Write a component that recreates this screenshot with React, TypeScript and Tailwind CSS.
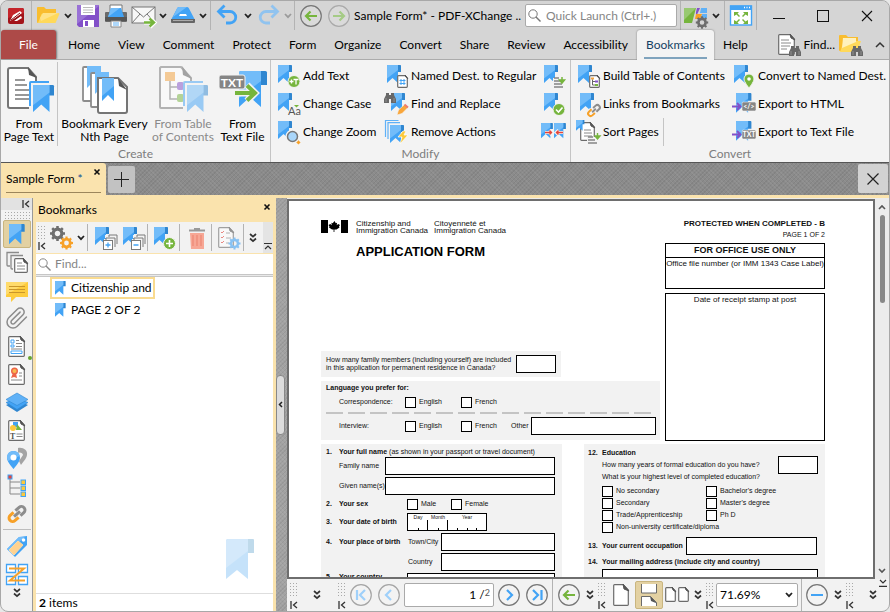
import type { ReactNode } from "react";
import { clsx } from "clsx";

interface SvgProps {
  size?: number;
  w?: number;
  h?: number;
  className?: string;
  children: ReactNode;
}

function Svg({ size = 24, w, h, className, children }: SvgProps) {
  const width = w ?? size;
  const height = h ?? size;
  return (
    <svg
      width={width}
      height={height}
      viewBox={`0 0 ${width} ${height}`}
      fill="none"
      className={clsx("shrink-0 overflow-visible", className)}
      aria-hidden="true"
    >
      {children}
    </svg>
  );
}

/* Blue ribbon bookmark, 14 x 18 units before scaling */
function Mark({ x = 1, y = 1, s = 1 }: { x?: number; y?: number; s?: number }) {
  return (
    <g transform={`translate(${x} ${y}) scale(${s})`}>
      <path d="M10 0h3.2a.8.8 0 0 1 .8.8V7h-4z" fill="#2f86d0" />
      <path d="M0 .8A.8.8 0 0 1 .8 0H11v18l-5.5-5L0 18z" fill="#42a3f5" />
      <path d="M0 .8A.8.8 0 0 1 .8 0H11v5L0 13.500z" fill="#72bcf9" />
    </g>
  );
}

function Page({ x = 0, y = 0, w = 16, h = 20, c = 5, stroke = "#6b6b6b" }) {
  return (
    <g transform={`translate(${x} ${y})`}>
      <path
        d={`M1.500 .7H${w - c}L${w - 0.7} ${c}V${h - 1.500}a.8.8 0 0 1-.8.8H1.500a.8.8 0 0 1-.8-.8V1.500a.8.8 0 0 1 .8-.8z`}
        fill="#fff"
        stroke={stroke}
        strokeWidth="1.2"
      />
      <path d={`M${w - c} 0L${w} ${c + 1}L${w - c + 1} ${c - 1}z`} fill="#555" stroke="#555" />
    </g>
  );
}

function Chevron({ light = false }: { light?: boolean }) {
  return (
    <Svg w={8} h={6}>
      <path d="M1 1l3 3.200L7 1" stroke={light ? "#9b9b9b" : "#222"} strokeWidth="1.8" />
    </Svg>
  );
}

function DoubleChevron() {
  return (
    <Svg w={8} h={10}>
      <path d="M1 1l3 2.700L7 1M1 5.500l3 2.700 3-2.700" stroke="#333" strokeWidth="1.7" />
    </Svg>
  );
}

function Collapse() {
  return (
    <Svg w={8} h={8}>
      <path d="M1 0v8M7 1L3.500 4 7 7" stroke="#333" strokeWidth="1.3" />
    </Svg>
  );
}

function Gear({ x, y, r, color }: { x: number; y: number; r: number; color: string }) {
  return (
    <g transform={`translate(${x} ${y})`}>
      <circle r={r * 0.58} stroke={color} strokeWidth={r * 0.42} />
      {[0, 45, 90, 135, 180, 225, 270, 315].map((a) => (
        <rect
          key={a}
          x={-r * 0.17}
          y={-r}
          width={r * 0.34}
          height={r * 0.34}
          fill={color}
          transform={`rotate(${a})`}
        />
      ))}
    </g>
  );
}

function Binoculars({ x, y }: { x: number; y: number }) {
  return (
    <g transform={`translate(${x} ${y})`}>
      <path d="M2 1h3v2h2V1h3v2l2 4v4H7V7H5v4H0V7l2-4z" fill="#686868" />
      <path d="M2 6v4M10 6v4" stroke="#8f8f8f" />
    </g>
  );
}

function Grip({ className }: { className?: string }) {
  return (
    <span
      className={clsx(
        "block bg-[radial-gradient(#a9a9a9_1px,transparent_1px)] bg-[size:3px_3px]",
        className,
      )}
    />
  );
}

function GripColumn() {
  return (
    <span className="flex w-[10px] shrink-0 flex-col items-center gap-1">
      <Grip className="h-[15px] w-full" />
      <Collapse />
    </span>
  );
}

function Sep({ className }: { className?: string }) {
  return <span className={clsx("w-px shrink-0 self-stretch bg-[#b3b3b3]", className)} />;
}

function RoundArrow({ label, color, d, ring = "#777" }: { label: string; color: string; d: string; ring?: string }) {
  return (
    <button aria-label={label} className="shrink-0">
      <Svg size={22}>
        <circle cx="11" cy="11" r="10.300" stroke={ring} strokeWidth="1.2" fill="#ffffff22" />
        <path d={d} stroke={color} strokeWidth="2.200" />
      </Svg>
    </button>
  );
}

const LEFT = "M17 11H6.500M10.500 6.500L6 11l4.500 4.500";
const RIGHT = "M5 11h10.500M11.500 6.500L16 11l-4.500 4.500";

function TitleBar() {
  return (
    <header className="flex h-[29px] items-center bg-[#d5d5d5]">
      <span className="flex w-[30px] shrink-0 items-center justify-center">
        <Svg size={16}>
          <rect width="16" height="16" rx="2" fill="#a3141a" />
          <path d="M0 2a2 2 0 0 1 2-2h12a2 2 0 0 1 2 2v3L0 10z" fill="#c4252b" />
          <path d="M2 13l3-6 7-4 2 2-7 5zM6 13l7-5 1 2-5 3z" fill="#fff" />
          <path d="M3 12l9-7M6 12l7-5" stroke="#8c1016" />
        </Svg>
      </span>
      <Sep />
      <div className="flex shrink-0 items-center pl-1">
        <button aria-label="Open" className="w-7">
          <Svg>
            <path d="M1 4a1 1 0 0 1 1-1h6l2 2h10v5H8L3 19H2a1 1 0 0 1-1-1z" fill="#f9bd2f" />
            <path d="M8 9h14.500l1 .8-4 9.200H2L5.500 10z" fill="#ffd95a" />
            <path d="M7 9h15L5 17 4 14z" fill="#ffe387" />
          </Svg>
        </button>
        <button aria-label="Open menu"><Chevron /></button>
        <button aria-label="Save" className="ml-1">
          <Svg>
            <path d="M1 2a1 1 0 0 1 1-1h20a1 1 0 0 1 1 1v21H3l-2-2z" fill="#8250c8" />
            <path d="M1 2a1 1 0 0 1 1-1h20a1 1 0 0 1 1 1L1 20z" fill="#9971d6" />
            <path d="M5 1h14v10H5zM7 16h11v7H7z" fill="#fff" />
            <path d="M7 3.500h10M7 6h10M7 8.500h10" stroke="#bbb" />
            <path d="M9 17h3v5H9z" fill="#8250c8" />
          </Svg>
        </button>
        <button aria-label="Print" className="ml-1">
          <Svg>
            <path d="M6 1h12v7H6z" fill="#fff" stroke="#777" />
            <rect x="1" y="8" width="22" height="10" rx="1" fill="#6a6a6a" />
            <path d="M1 13h22v4H1z" fill="#555" />
            <path d="M4 13l3-9h10l3 9z" fill="#42a3f5" />
            <path d="M4 13l3-9h9z" fill="#72bcf9" />
            <path d="M7 17h10v6H7z" fill="#fff" stroke="#888" />
            <path d="M9 19h6M9 21h6" stroke="#5fb1f7" />
          </Svg>
        </button>
        <button aria-label="Email" className="ml-[3px] mr-[3px]">
          <Svg w={25} h={24}>
            <rect x="1" y="3" width="23" height="16" fill="#f7f7f7" stroke="#777" />
            <path d="M1 3l11.500 10L24 3M1 19l8-9M24 19l-8-9" stroke="#777" />
            <path d="M13 18.500h10M19 14l4.500 4.500L19 23" stroke="#fff" strokeWidth="4" />
            <path d="M13 18.500h9M18.500 14.500l4.500 4-4.500 4" stroke="#76b53d" strokeWidth="2.400" />
          </Svg>
        </button>
        <button aria-label="Email menu"><Chevron /></button>
        <button aria-label="Scan" className="ml-1 mr-1">
          <Svg>
            <path d="M6 4.500A2 2 0 0 1 8 3h8a2 2 0 0 1 2 1.500L23.500 15H.5z" fill="#42a3f5" />
            <path d="M6 4.500A2 2 0 0 1 8 3h8L2 13z" fill="#72bcf9" />
            <path d="M9 10h6l1 2H8z" fill="#fff" />
            <path d="M0 15h24v3a1 1 0 0 1-1 1H1a1 1 0 0 1-1-1z" fill="#666" />
            <path d="M2 16.500h20" stroke="#aaa" />
          </Svg>
        </button>
        <button aria-label="Scan menu"><Chevron /></button>
      </div>
      <Sep className="ml-[3px]" />
      <div className="flex shrink-0 items-center gap-1 pl-[5px]">
        <button aria-label="Undo">
          <Svg>
            <path d="M2 7.500h12a5.500 5.500 0 0 1 0 11.500h-4M8.500 1.500l-6 6 6 6" stroke="#42a3f5" strokeWidth="2.800" />
          </Svg>
        </button>
        <button aria-label="Undo menu"><Chevron /></button>
        <button aria-label="Redo">
          <Svg>
            <path d="M22 7.500H10a5.500 5.500 0 0 0 0 11.500h4M15.500 1.500l6 6-6 6" stroke="#90c3ef" strokeWidth="2.800" />
          </Svg>
        </button>
        <button aria-label="Redo menu"><Chevron light /></button>
      </div>
      <Sep className="ml-[2px]" />
      <div className="flex shrink-0 items-center gap-[6px] pl-[5px]">
        <RoundArrow label="Back" color="#76b53d" d={LEFT} />
        <RoundArrow label="Forward" color="#a5cb86" d={RIGHT} ring="#aaa" />
      </div>
      <h1 className="ml-1 min-w-0 flex-1 whitespace-nowrap text-xs">Sample Form* - PDF-XChange ..</h1>
      <label className="flex h-[23px] w-[152px] shrink-0 items-center gap-[5px] rounded-[2px] border border-[#aaa] bg-white pl-[2px]">
        <Svg size={13}>
          <circle cx="5" cy="5" r="4.200" stroke="#777" />
          <path d="M8 8l4.500 4.500" stroke="#777" strokeWidth="1.4" />
        </Svg>
        <input
          aria-label="Quick Launch"
          placeholder="Quick Launch (Ctrl+.)"
          className="w-full min-w-0 bg-transparent text-xs outline-none placeholder:text-[#858585]"
        />
      </label>
      <Sep className="ml-[3px]" />
      <button aria-label="UI options" className="ml-[3px] mr-1">
        <Svg>
          <path d="M0 4h12L8 19H0z" fill="#76b53d" />
          <path d="M0 4h12L0 16z" fill="#98c970" />
          <path d="M13 4h3l-4 9v-5z" fill="#8250c8" />
          <path d="M17 4h6v5h-7zM18 10h5v4h-6z" fill="#5fb1f7" />
          <path d="M12 10h6l-2 5h-5z" fill="#f7a128" />
          <Gear x={18} y={18.5} r={6.2} color="#6d6d6d" />
        </Svg>
      </button>
      <button aria-label="UI options menu"><Chevron /></button>
      <Sep className="ml-1" />
      <button aria-label="Full screen" className="ml-1 mr-[3px]">
        <Svg>
          <rect x="1.500" y="2" width="21" height="19" fill="#fff" stroke="#42a3f5" strokeWidth="1.4" />
          <path d="M1 1.500h22V6H1z" fill="#42a3f5" />
          <path d="M15 3.500h1M17.500 3.500h1M20 3.500h1" stroke="#fff" strokeWidth="1.4" />
          <path
            d="M5 8h5L8.500 9.500 11 12l-1 1-2.500-2.500L5 12zM19 8h-5l1.500 1.500L13 12l1 1 2.500-2.500L19 12zM5 20h5l-1.500-1.500L11 16l-1-1-2.500 2.500L5 16zM19 20h-5l1.500-1.500L13 16l1-1 2.500 2.500L19 16z"
            fill="#76b53d"
          />
        </Svg>
      </button>
      <Sep />
      <div className="flex h-full shrink-0 items-center gap-8 pl-4 pr-4">
        <button aria-label="Minimize"><Svg size={12}><path d="M0 8.500h12" stroke="#111" /></Svg></button>
        <button aria-label="Maximize"><Svg size={12}><rect x=".5" y=".5" width="11" height="11" stroke="#111" /></Svg></button>
        <button aria-label="Close"><Svg size={12}><path d="M1 1l10 10M11 1L1 11" stroke="#111" strokeWidth="1.1" /></Svg></button>
      </div>
    </header>
  );
}

const TABS = [
  "Home", "View", "Comment", "Protect", "Form", "Organize", "Convert",
  "Share", "Review", "Accessibility", "Bookmarks", "Help",
];

function RibbonTabs() {
  return (
    <nav className="flex h-[30px] items-stretch border-b border-[#ababab] bg-[#d5d5d5] text-xs">
      <button className="w-[55px] shrink-0 rounded-t-[3px] bg-[#ad4a48] text-white shadow-[1px_0_2px_#777]">
        File
      </button>
      <span className="w-[3px] shrink-0" />
      {TABS.map((tab) => (
        <button
          key={tab}
          className={clsx(
            "relative shrink-0 px-[9px]",
            tab === "Bookmarks" &&
              "-mb-px rounded-t-[3px] bg-[#f3f3f3] text-[#143f63] shadow-[0_0_2px_#777] [clip-path:inset(-3px_-3px_0_-3px)]",
          )}
        >
          {tab}
          {tab === "Bookmarks" && <span className="absolute inset-x-[7px] bottom-px h-[2px] bg-[#7fa3bd]" />}
        </button>
      ))}
      <div className="ml-auto flex shrink-0 items-center gap-[3px]">
        <button className="flex items-center gap-[2px]">
          <Svg>
            <Page x={1} y={1} w={17} h={21} />
            <path d="M4 7h8M4 10h10M4 13h9M4 16h6" stroke="#8a8a8a" />
            <Binoculars x={12} y={12} />
          </Svg>
          Find...
        </button>
        <button aria-label="Search in folder">
          <Svg w={26} h={24}>
            <path d="M1 3a1 1 0 0 1 1-1h6l2 2h10v5H8L3 18H2a1 1 0 0 1-1-1z" fill="#f9bd2f" />
            <path d="M6 8h17l-4 11H2z" fill="#ffd95a" />
            <path d="M5 5h13v4L4 15z" fill="#fff1bd" />
            <Binoculars x={13} y={12} />
          </Svg>
        </button>
        <button aria-label="Collapse ribbon" className="mr-1 pl-2">
          <Svg w={10} h={7}><path d="M1 6l4-4 4 4" stroke="#333" strokeWidth="1.500" /></Svg>
        </button>
      </div>
    </nav>
  );
}

function BigButton({ lines, icon, muted, className }: { lines: string[]; icon: ReactNode; muted?: boolean; className: string }) {
  return (
    <button
      className={clsx("flex shrink-0 flex-col items-center whitespace-nowrap pt-1 leading-[13px]", muted && "text-[#8a8a8a]", className)}
    >
      {icon}
      <span className="mt-[3px]">{lines[0]}</span>
      <span>{lines[1]}</span>
    </button>
  );
}

function SmallButton({ label, icon, aria }: { label?: string; icon: ReactNode; aria?: string }) {
  return (
    <button aria-label={aria} className="flex h-7 items-center gap-[2px] whitespace-nowrap">
      <Svg>{icon}</Svg>
      {label}
    </button>
  );
}

function Group({ title, className, children }: { title: string; className: string; children: ReactNode }) {
  return (
    <section className={clsx("flex flex-col pt-[2px]", className)}>
      <div className="flex h-[84px]">{children}</div>
      <h2 className="text-center leading-[16px] text-[#7d7d7d]">{title}</h2>
    </section>
  );
}

function Tag({ text }: { text: string }) {
  return (
    <g>
      <rect x="10" y="10" width="14" height="9" rx="1.500" fill="#858585" stroke="#f3f3f3" strokeWidth=".6" />
      <text x="17" y="17.200" fontSize="7" fontWeight="bold" textAnchor="middle" fill="#fff">{text}</text>
      <path d="M0 14.500h8M5 11l3.500 3.500L5 18" stroke="#8250c8" strokeWidth="1.800" />
    </g>
  );
}

function Ribbon() {
  return (
    <div className="flex h-[102px] bg-[#f3f3f3] text-xs text-black">
      <Group title="Create" className="w-[269px] shrink-0">
        <BigButton
          className="w-14"
          lines={["From", "Page Text"]}
          icon={
            <Svg size={48}>
              <path d="M5 2h18l8 9v29a2 2 0 0 1-2 2H5a2 2 0 0 1-2-2V4a2 2 0 0 1 2-2z" fill="#fff" stroke="#757575" strokeWidth="2" />
              <path d="M23 1l9 11-8-3z" fill="#555" />
              <path d="M10 14h10M10 19h12M10 24h14M10 29h14M10 33h14" stroke="#777" strokeWidth="1.500" />
              <path d="M24 15h22v30H24z" fill="#f3f3f3" />
              <path d="M25 40V17a1 1 0 0 1 1-1h18" stroke="#42a3f5" strokeWidth="2" />
              <Mark x={28} y={19} s={1.5} />
            </Svg>
          }
        />
        <Sep className="bg-[#c4c4c4]" />
        <BigButton
          className="w-[93px]"
          lines={["Bookmark Every", "Nth Page"]}
          icon={
            <Svg size={48}>
              {[[0, 0], [8, 6]].map(([x, y]) => (
                <g key={x} transform={`translate(${x} ${y})`}>
                  <path d="M3 1h16v34H3a1 1 0 0 1-1-1V2a1 1 0 0 1 1-1z" fill="#fff" stroke="#8c8c8c" strokeWidth="1.800" />
                  <path d="M6 0h14v8L6 22z" fill="#72bcf9" />
                </g>
              ))}
              <path d="M17 12h20l9 9v24a2 2 0 0 1-2 2H19a2 2 0 0 1-2-2z" fill="#fff" stroke="#757575" strokeWidth="2" />
              <path d="M37 12l9 12-8-4z" fill="#555" />
              <path d="M21 12h12v23l-6-6-6 6z" fill="#42a3f5" />
              <path d="M21 12h12v8L21 30z" fill="#72bcf9" />
            </Svg>
          }
        />
        <BigButton
          className="w-[64px]"
          muted
          lines={["From Table", "of Contents"]}
          icon={
            <Svg size={48} className="opacity-50">
              <path d="M2 1h20l10 11v30H2a1 1 0 0 1-1-1V2z" fill="#fff" stroke="#757575" strokeWidth="2" />
              <path d="M23 0l10 13-9-4z" fill="#555" />
              <rect x="6" y="6" width="10" height="9" fill="#f5a33c" />
              <path d="M11 15v18h7M11 21h8" stroke="#757575" strokeWidth="1.500" />
              <rect x="18" y="16" width="7" height="8" rx="2" fill="#8250c8" />
              <rect x="18" y="28" width="7" height="8" rx="2" fill="#76b53d" />
              <path d="M24 15h22v30H24z" fill="#f3f3f3" />
              <path d="M25 40V17a1 1 0 0 1 1-1h18" stroke="#42a3f5" strokeWidth="2" />
              <Mark x={28} y={19} s={1.5} />
            </Svg>
          }
        />
        <BigButton
          className="flex-1"
          lines={["From", "Text File"]}
          icon={
            <Svg size={48}>
              <Mark x={20} y={5} s={2} />
              <rect x="0" y="9" width="26" height="14" rx="2" fill="#858585" stroke="#f3f3f3" />
              <text x="13" y="20.500" fontSize="12" fontWeight="bold" textAnchor="middle" fill="#fff">TXT</text>
              <path d="M15 27h20M28 19l8 8-8 8" stroke="#f3f3f3" strokeWidth="7" />
              <path d="M16 27h19M28 19.500l8 7.500-8 7.500" stroke="#76b53d" strokeWidth="4" />
            </Svg>
          }
        />
      </Group>
      <Sep className="bg-[#c4c4c4]" />
      <Group title="Modify" className="w-[299px] shrink-0">
        <div className="w-[108px] shrink-0 pl-[6px]">
          <SmallButton label="Add Text" icon={<>
            <Mark />
            <circle cx="17" cy="17.500" r="6" fill="#76b53d" stroke="#f3f3f3" />
            <path d="M12.500 17.500h4M14.500 15.500v4M16.500 15.500h5M19 15.500v5" stroke="#fff" strokeWidth="1.3" />
          </>} />
          <SmallButton label="Change Case" icon={<>
            <Mark />
            <text x="11" y="23" fontSize="11" fill="#555" stroke="#f3f3f3" strokeWidth="2" paintOrder="stroke">Aa</text>
            <path d="M17 13h5l-2.500 2.500z" fill="#76b53d" />
          </>} />
          <SmallButton label="Change Zoom" icon={<>
            <Mark />
            <path d="M18 19l4.500 4.500" stroke="#f7a128" strokeWidth="3" />
            <circle cx="15.500" cy="16.500" r="5.500" fill="#a9d6fa" stroke="#f3f3f3" strokeWidth="3" />
            <circle cx="15.500" cy="16.500" r="5" fill="#a9d6fa" stroke="#777" strokeWidth="1.500" />
          </>} />
        </div>
        <div className="w-[157px] shrink-0 pl-[6px]">
          <SmallButton label="Named Dest. to Regular" icon={<>
            <Mark x={2} />
            <Page x={12} y={11} w={11} h={13} c={3} />
            <path d="M16 15v6M19 15v6M14.500 16.500h6M14.500 19.500h6" stroke="#42a3f5" />
          </>} />
          <SmallButton label="Find and Replace" icon={<>
            <Mark x={6} y={1} />
            <path d="M12 23l1.500-5 6-5.500 3.500 3-6 6z" fill="#f9a63b" stroke="#f3f3f3" strokeWidth=".6" />
            <path d="M19.500 12.500l3.500 3" stroke="#ef7c6f" strokeWidth="2" />
            <Binoculars x={-1} y={0} />
          </>} />
          <SmallButton label="Remove Actions" icon={<>
            <path d="M.5 17V.5h13M3 19V2.700H15" stroke="#5fb1f7" strokeWidth="1.2" />
            <Mark x={5} y={5} />
            <path d="M18 11l-5 6h4l-2 7 8-9h-4l2-4z" fill="#fcc93b" stroke="#fff" strokeWidth=".7" />
          </>} />
        </div>
        <div className="pl-[6px]">
          <SmallButton aria="Sort Bookmarks" icon={<>
            <Mark x={2} />
            <path d="M11 14h12v10H11z" fill="#f3f3f3" />
            <path d="M12 14h5M12 17h6M12 20h8M12 23h9" stroke="#858585" strokeWidth="1.500" />
            <path d="M20 13v4M17.500 16h5L20 19z" stroke="#76b53d" strokeWidth="1.500" fill="#76b53d" />
          </>} />
          <SmallButton aria="Validate Bookmarks" icon={<>
            <Mark x={2} />
            <circle cx="17" cy="17.500" r="6" fill="#76b53d" stroke="#f3f3f3" />
            <path d="M14 17.500l2.500 2.500 4-4.500" stroke="#fff" strokeWidth="1.600" />
          </>} />
          <SmallButton aria="Merge Bookmarks" icon={<>
            <Mark x={-1} y={3} s={0.85} />
            <Mark x={12} y={3} s={0.85} />
            <path d="M3 12.500h7M7.500 10L10 12.500 7.500 15M21 12.500h-7M16.500 10L14 12.500l2.500 2.500" stroke="#f3f3f3" strokeWidth="3" />
            <path d="M3 12.500h7M7.500 10.500l2 2-2 2M21 12.500h-7M16.500 10.500l-2 2 2 2" stroke="#e4453a" strokeWidth="1.400" />
          </>} />
        </div>
      </Group>
      <Sep className="bg-[#c4c4c4]" />
      <Group title="Convert" className="flex-1">
        <div className="w-[155px] shrink-0 pl-[6px]">
          <SmallButton label="Build Table of Contents" icon={<>
            <Mark />
            <Page x={12} y={11} w={11} h={13} c={3} />
            <path d="M14 13.500h3v2h-3z" fill="#f5a33c" />
            <path d="M18 16.500h3v2h-3z" fill="#8250c8" />
            <path d="M18 20h3v2h-3z" fill="#76b53d" />
            <path d="M15.500 15.500V21H18M15.500 17.500H18" stroke="#666" />
          </>} />
          <SmallButton label="Links from Bookmarks" icon={<>
            <Mark x={3} />
            <g transform="translate(17 18.500) rotate(-42)">
              <path d="M-1 -2.500H-4.500a2.500 2.500 0 0 0 0 5H-1M1 -2.500h3.500a2.500 2.500 0 0 1 0 5H1" stroke="#f3f3f3" strokeWidth="4" />
              <path d="M-1 -2.500H-4.500a2.500 2.500 0 0 0 0 5H-1" stroke="#f7a128" strokeWidth="2" />
              <path d="M1 -2.500h3.500a2.500 2.500 0 0 1 0 5H1M-2.500 0h5" stroke="#8d8d8d" strokeWidth="2" />
            </g>
          </>} />
          <div className="flex items-stretch gap-1">
            <SmallButton label="Sort Pages" icon={<>
              <Page x={3} y={2} w={15} h={19} />
              <Mark x={-1} y={0} s={0.6} />
              <path d="M7 10h7M7 13h8M7 16h8" stroke="#888" />
              <path d="M10 17h13v7H10z" fill="#f3f3f3" />
              <path d="M11 17h5M11 20h7M11 23h9" stroke="#858585" strokeWidth="1.500" />
              <path d="M20.500 13v4M18 16h5l-2.500 3z" stroke="#76b53d" strokeWidth="1.400" fill="#76b53d" />
            </>} />
            <Sep className="bg-[#c4c4c4]" />
          </div>
        </div>
        <div className="shrink-0 pl-[6px]">
          <SmallButton label="Convert to Named Dest." icon={<>
            <Mark x={2} />
            <path d="M17 10a5 5 0 0 1 5 5c0 3-5 9-5 9s-5-6-5-9a5 5 0 0 1 5-5z" fill="#76b53d" stroke="#f3f3f3" />
            <circle cx="17" cy="15" r="1.800" fill="#fff" />
          </>} />
          <SmallButton label="Export to HTML" icon={<><Mark x={4} y={1} s={1.1} /><Tag text="</>" /></>} />
          <SmallButton label="Export to Text File" icon={<><Mark x={4} y={1} s={1.1} /><Tag text="TXT" /></>} />
        </div>
      </Group>
    </div>
  );
}

const TEXTURE =
  "bg-[repeating-linear-gradient(45deg,#ffffff10_0_1px,transparent_1px_3px),repeating-linear-gradient(-45deg,#00000010_0_1px,transparent_1px_3px)]";

function DocumentTabs() {
  return (
    <div className={clsx("flex h-9 items-start border-b-[3px] border-t border-b-[#fae3ad] border-t-[#555] bg-[#8b8b8b]", TEXTURE)}>
      <div className="relative h-8 w-[105px] shrink-0 rounded-tr-[3px] bg-[#fae3ae] pl-[5px] text-xs leading-8">
        Sample Form <span className="text-[#0b4d94]">*</span>
        <button aria-label="Close Sample Form" className="absolute right-[6px] top-[6px]">
          <Svg size={6}><path d="M.5 .5l5 5M5.500 .5l-5 5" stroke="#111" strokeWidth="1.600" /></Svg>
        </button>
        <span className="absolute inset-x-[5px] bottom-[2px] h-px bg-[#9c865c]" />
      </div>
      <button aria-label="New tab" className="ml-[2px] mt-[3px] flex h-[27px] w-[27px] items-center justify-center rounded-[2px] bg-[#c2c2c2]">
        <Svg size={15}><path d="M7.500 0v15M0 7.500h15" stroke="#222" /></Svg>
      </button>
      <button aria-label="Close document" className="ml-auto mr-px mt-px flex h-[29px] w-[30px] items-center justify-center rounded-[2px] bg-[#d2d2d2]">
        <Svg size={12}><path d="M.5 .5l11 11M11.500 .5l-11 11" stroke="#222" strokeWidth="1.200" /></Svg>
      </button>
    </div>
  );
}

const PANES: { label: string; icon: ReactNode }[] = [
  { label: "Bookmarks", icon: <Mark x={4} y={2} s={1.12} /> },
  { label: "Thumbnails", icon: <>
    <path d="M5 16H3a1 1 0 0 1-1-1V2.500h12M8 19H7a1 1 0 0 1-1-1V5.500h12" stroke="#8a8a8a" strokeWidth="1.300" />
    <Page x={9} y={8} w={14} h={15} />
    <path d="M12 13h5M12 16h8M12 19h8" stroke="#8a8a8a" />
  </> },
  { label: "Comments", icon: <>
    <path d="M1 4h22v15H11l-5 5v-5H1z" fill="#fdcc3d" />
    <path d="M1 4h22L1 17z" fill="#ffdb6b" />
    <path d="M4 8.500h16M4 11.500h16M4 14.500h16" stroke="#c9962a" strokeWidth="1.200" />
  </> },
  { label: "Attachments", icon: (
    <path
      d="m21.440 11.050-9.190 9.190a6 6 0 0 1-8.490-8.490l8.570-8.570A4 4 0 1 1 18 8.840l-8.590 8.570a2 2 0 0 1-2.830-2.830l8.490-8.480"
      stroke="#8b8b8b"
      strokeWidth="1.500"
      strokeLinecap="round"
    />
  ) },
  { label: "Fields", icon: <>
    <Page x={3} y={2} w={17} h={21} />
    <path d="M6 6h3v3H6zM6 11h3v2H6zM6 17h11v2.500H6z" stroke="#42a3f5" />
    <path d="M11 6.500h3M11 9.500h6M11 12.500h6M6 15h11" stroke="#888" />
  </> },
  { label: "Signatures", icon: <>
    <Page x={3} y={2} w={17} h={21} />
    <path d="M8 11l-2 5 3-1 3 1-1-5z" fill="#ec6449" />
    <circle cx="9.500" cy="9" r="2.800" fill="#f9b94f" stroke="#ec6449" strokeWidth="1.400" />
    <path d="M14 11h3M14 14h3M6 18h11" stroke="#888" />
  </> },
  { label: "Layers", icon: <>
    <path d="M1 15l11-5 11 5-11 7z" fill="#2f86d0" />
    <path d="M1 12.500l11-5 11 5-11 7z" fill="#42a3f5" stroke="#2f86d0" strokeWidth=".6" />
    <path d="M1 9.500L12 3l11 6.500-11 6z" fill="#5fb1f7" stroke="#2f86d0" strokeWidth=".6" />
  </> },
  { label: "Content", icon: <>
    <Page x={3} y={2} w={17} h={21} />
    <rect x="8" y="4" width="5" height="5" fill="#42a3f5" />
    <path d="M12 6l5 6h-6z" fill="#76b53d" />
    <circle cx="8" cy="10" r="3" fill="#fcc93b" />
    <text x="5" y="21" fontSize="8" fontWeight="bold" fill="#555" fontFamily="Liberation Serif, serif">T</text>
    <path d="M11.500 16h6M11.500 18.500h6" stroke="#888" />
  </> },
  { label: "Destinations", icon: <>
    <path d="M13 2c5-1 10 2 9 7-.5 4-5 8-6 10l-2-4 4-6c0-2-3-3-5-2z" fill="#a3a3a3" />
    <path d="M8.500 5a6.500 6.500 0 0 1 6.500 7c0 4-6.500 11-6.500 11S2 16 2 12a6.500 6.500 0 0 1 6.500-7z" fill="#42a3f5" />
    <path d="M8.500 5a6.500 6.500 0 0 1 6 5L3 15c-3-6 1-10 5.500-10z" fill="#72bcf9" />
    <circle cx="8.500" cy="11.500" r="3" fill="#fff" />
  </> },
  { label: "Structure", icon: <>
    <path d="M5 5v15h10M5 8h10M5 14h10" stroke="#888" />
    <rect x="3" y="1" width="4" height="4" fill="#e4453a" stroke="#42a3f5" />
    {[6, 12, 18].map((y) => <rect key={y} x="16" y={y} width="4.500" height="4.500" fill="#fcc93b" stroke="#42a3f5" />)}
  </> },
  { label: "Links", icon: <g transform="translate(12 12) rotate(-42)" strokeWidth="3">
    <path d="M-1.500 -3.500H-6a3.500 3.500 0 0 0 0 7H-1" stroke="#f7a128" />
    <path d="M1 -3.500h5a3.500 3.500 0 0 1 0 7H1.500M-4 0h8" stroke="#8d8d8d" />
  </g> },
  { label: "Tags", icon: <>
    <path d="M2 15L14 3l8-1v9L10 23z" fill="#42a3f5" />
    <path d="M2 15L14 3h6L4 17z" fill="#72bcf9" />
    <path d="M4 16l9-9 5 4-9 10z" fill="#ffd28f" stroke="#f7d9a8" />
    <circle cx="18.500" cy="6" r="1.800" fill="#fff" />
  </> },
  { label: "Order", icon: <>
    <path d="M1.500 2.500h9v8h-9zM13.500 2.500h9v8h-9zM1.500 14.500h9v8h-9zM13.500 14.500h9v8h-9z" fill="#fff" stroke="#42a3f5" strokeWidth="1.300" />
    <path d="M4 6.500h15L5 18.500h15" stroke="#f7a128" strokeWidth="2" />
  </> },
];

function PaneBar() {
  return (
    <aside className="flex w-8 shrink-0 flex-col items-center border-r border-[#9a9a9a] bg-[#f2f2f2]">
      <button aria-label="Collapse panes" className="flex h-3 w-full items-center justify-end bg-[#e2e2e2] pr-[2px]"><Collapse /></button>
      <Grip className="mt-px h-[9px] w-[26px]" />
      {PANES.map(({ label, icon }, i) => (
        <span key={label} className="relative flex flex-col items-center">
          {label === "Tags" && <span className="mb-[2px] mt-px h-px w-7 bg-[#bdbdbd]" />}
          <button
            aria-label={label}
            className={clsx("flex h-7 w-7 items-center justify-center", i === 0 && "rounded-[2px] border border-[#c9b57f] bg-[#e3d1a2]")}
          >
            <Svg>{icon}</Svg>
          </button>
          {label === "Fields" && <span className="absolute -right-px bottom-0 size-1 rounded-full bg-[#67a52e]" />}
        </span>
      ))}
      <button aria-label="More panes"><DoubleChevron /></button>
    </aside>
  );
}

function StackIcon({ minus }: { minus?: boolean }) {
  return (
    <Svg>
      <Mark x={1} y={1} />
      <path d="M10 15h11V9M13 12V11h11v6" stroke="#f3f3f3" strokeWidth="4" />
      <path d="M12 14v-2h9v9M15 11V9h8v9" stroke="#7a7a7a" />
      <rect x="9.500" y="14.500" width="9" height="9" fill="#fff" stroke="#7a7a7a" />
      <path d={minus ? "M11.500 19h5" : "M11.500 19h5M14 16.500v5"} stroke="#42a3f5" strokeWidth="1.300" />
    </Svg>
  );
}

function BookmarksPanel() {
  return (
    <section className="flex w-[243px] shrink-0 flex-col border-x-[3px] border-[#fae3ad] bg-[#fae3ad] text-xs">
      <h2 className="flex h-[24px] items-center pl-[2px] pr-[3px] text-black">
        Bookmarks
        <button aria-label="Close panel" className="mb-[6px] ml-auto">
          <Svg size={6}><path d="M.5 .5l5 5M5.500 .5l-5 5" stroke="#111" strokeWidth="1.600" /></Svg>
        </button>
      </h2>
      <div className="flex h-[31px] items-center bg-[#f2f2f2]">
        <span className="flex w-[12px] flex-col items-center gap-[2px]"><Grip className="h-[15px] w-[10px]" /><Collapse /></span>
        <button aria-label="Options" className="ml-[2px]">
          <Svg><Gear x={7.5} y={7.5} r={7.5} color="#6f6f6f" /><Gear x={16.5} y={17} r={6.5} color="#f7a128" /></Svg>
        </button>
        <button aria-label="Options menu" className="ml-[3px] mr-[2px]"><Chevron /></button>
        <Sep className="my-[2px]" />
        <button aria-label="Expand all" className="ml-[6px] mr-1"><StackIcon /></button>
        <button aria-label="Collapse all"><StackIcon minus /></button>
        <Sep className="my-[2px] ml-px" />
        <button aria-label="Add bookmark" className="ml-[5px] mr-[2px]">
          <Svg>
            <Mark x={1} />
            <circle cx="16.500" cy="17.500" r="6" fill="#76b53d" stroke="#f3f3f3" />
            <path d="M13 17.500h7M16.500 14v7" stroke="#fff" strokeWidth="1.600" />
          </Svg>
        </button>
        <Sep className="my-[2px]" />
        <button aria-label="Delete" className="ml-[5px] mr-[2px]">
          <Svg>
            <path d="M5 7h14v16H6z" fill="#f7a795" />
            <path d="M8 9v11M12 9v11M16 9v11" stroke="#ec8876" strokeWidth="1.200" />
            <path d="M4 4.500h16M9 3h6" stroke="#999" strokeWidth="2" />
          </Svg>
        </button>
        <Sep className="my-[2px]" />
        <button aria-label="Properties" className="ml-[5px] mr-[2px]">
          <Svg className="opacity-60">
            <Page x={1} y={1} w={16} h={21} />
            <path d="M4 6l1 1 2-2M4 11l1 1 2-2M4 16l1 1 2-2" stroke="#e4453a" />
            <path d="M9 7h4M9 12h5M9 17h3" stroke="#888" />
            <Gear x={17.5} y={17.5} r={6} color="#42a3f5" />
          </Svg>
        </button>
        <Sep className="my-[2px]" />
        <button aria-label="More" className="ml-[5px]"><DoubleChevron /></button>
        <button aria-label="Collapse toolbar" className="ml-auto flex h-full items-end bg-[#e4e4e4] pb-[3px] pl-px pr-px">
          <Svg w={8} h={8}><path d="M0 1.500h8M1 7l3-3 3 3" stroke="#333" strokeWidth="1.200" /></Svg>
        </button>
      </div>
      <label className="mt-px flex h-5 items-center gap-1 bg-white pl-[2px]">
        <Svg size={13}>
          <circle cx="5" cy="5" r="4.200" stroke="#888" />
          <path d="M8 8l4.500 4.500" stroke="#888" strokeWidth="1.400" />
        </Svg>
        <input aria-label="Find bookmark" placeholder="Find..." className="w-full min-w-0 bg-transparent outline-none placeholder:text-[#858585]" />
      </label>
      <div className="h-[3px] border-y border-[#c6c6c6] bg-[#e9e9e9]" />
      <ul className="relative min-h-0 flex-1 border-b border-[#dedede] bg-white pl-[14px]">
        {["Citizenship and", "PAGE 2 OF 2"].map((name, i) => (
          <li key={name}>
            <button
              className={clsx(
                "flex h-[22px] items-center gap-[5px] whitespace-nowrap border-2 pl-[3px] pr-px",
                i === 0 ? "border-[#f9db90]" : "border-transparent",
              )}
            >
              <Svg w={11} h={14}><Mark x={0} y={0} s={0.76} /></Svg>
              {name}
            </button>
          </li>
        ))}
        <li className="absolute bottom-[13px] right-[19px] opacity-30">
          <Svg w={28} h={41}>
            <path d="M20 0h7a1 1 0 0 1 1 1v13h-8z" fill="#2f86c0" />
            <path d="M0 2a2 2 0 0 1 2-2h20v40L11 31 0 40z" fill="#42a3f0" />
            <path d="M0 2a2 2 0 0 1 2-2h20v12L0 29z" fill="#72b8f5" />
          </Svg>
        </li>
      </ul>
      <p className="h-[17px] bg-white pl-[3px] leading-[17px]"><b>2</b> items</p>
    </section>
  );
}

function Field({ label, className }: { label: string; className: string }) {
  return <input aria-label={label} className={clsx("h-[18px] shrink-0 border border-black bg-white px-1 outline-none", className)} />;
}

function Check({ label, className }: { label: string; className?: string }) {
  return (
    <label className={clsx("flex items-center gap-[3px] whitespace-nowrap", className)}>
      <input type="checkbox" className="size-[11px] shrink-0 appearance-none border border-black bg-white" />
      {label}
    </label>
  );
}

function Row({ no, title, className, children }: { no?: string; title?: ReactNode; className: string; children?: ReactNode }) {
  return (
    <div className={clsx("flex whitespace-nowrap", className)}>
      <b className="w-[13px] shrink-0">{no}</b>
      {title}
      {children}
    </div>
  );
}

const LEVELS = [
  "No secondary", "Bachelor's degree", "Secondary", "Master's degree",
  "Trade/Apprenticeship", "Ph D", "Non-university certificate/diploma",
];

function FormPage() {
  return (
    <article className="h-full overflow-hidden bg-white pl-8 pr-[48px] pt-[17px] font-['Liberation_Sans',Arial,sans-serif] text-[7px] leading-[8px] text-[#111]">
      <div className="flex gap-[5px]">
        <div className="flex min-w-0 flex-1 flex-col">
          <div className="flex text-[8px] leading-[7px]">
            <Svg w={27} h={13} className="mt-[2px]">
              <path d="M0 0h7v13H0zM20 0h7v13h-7z" fill="#000" />
              <path d="M13.500 1l1.300 2.200 1.300-.5-.4 2.600 1.500-1.200 1.800 1-1 1.500.5.800-3 2.100h-2.100v2.500h-.8V9.500H11L8 7.400l.5-.8-1-1.500 1.800-1 1.500 1.200-.4-2.600 1.300.5z" fill="#000" />
            </Svg>
            <p className="ml-2 mt-[2px] w-[78px] whitespace-nowrap">Citizenship and<br />Immigration Canada</p>
            <p className="mt-[2px] whitespace-nowrap">Citoyenneté et<br />Immigration Canada</p>
          </div>
          <h2 className="mb-[91px] ml-[35px] mt-[10px] text-[13px] font-bold leading-4 text-black">APPLICATION FORM</h2>
          <div className="flex h-[26px] w-[240px] items-center justify-between bg-[#f2f2f2] pl-[5px] pr-[5px]">
            <p className="whitespace-nowrap">How many family members (including yourself) are included<br />in this application for permanent residence in Canada?</p>
            <Field label="Family members" className="w-10" />
          </div>
          <div className="mt-1 flex h-[59px] flex-col bg-[#f2f2f2] pl-[5px] pr-1 pt-[3px]">
            <b>Language you prefer for:</b>
            <div className="flex h-5 items-center">
              <span className="w-[79px] pl-[13px]">Correspondence:</span>
              <Check label="English" className="w-14" />
              <Check label="French" />
            </div>
            <div className="mr-1 h-[2px] shrink-0 bg-[repeating-linear-gradient(90deg,#c4c4c4_0_17px,transparent_17px_22px)]" />
            <div className="flex h-6 items-center">
              <span className="w-[79px] pl-[13px]">Interview:</span>
              <Check label="English" className="w-14" />
              <Check label="French" className="w-[50px]" />
              <span className="w-5">Other</span>
              <Field label="Other language" className="ml-auto w-[125px]" />
            </div>
          </div>
        </div>
        <div className="w-40 shrink-0">
          <p className="whitespace-nowrap pt-[2px] text-right text-[8px] font-bold">PROTECTED WHEN COMPLETED - B</p>
          <p className="mb-[4px] mt-[3px] text-right">PAGE 1 OF 2</p>
          <div className="h-[46px] border border-black text-center text-[8px]">
            <h3 className="h-[14px] border-b border-black text-[9px] font-bold leading-[13px]">FOR OFFICE USE ONLY</h3>
            <p className="mt-[2px] whitespace-nowrap">Office file number (or IMM 1343 Case Label)</p>
          </div>
          <div className="mt-1 h-[148px] border border-black pt-[2px] text-center text-[8px]">Date of receipt stamp at post</div>
        </div>
      </div>
      <div className="mt-[3px] flex gap-[22px]">
        <div className="w-[241px] shrink-0 bg-[#f2f2f2] pb-6 pl-[5px] pr-[7px]">
          <Row no="1." className="h-3 items-end" title={<span><b>Your full name</b> (as shown in your passport or travel document)</span>} />
          <Row className="h-5 items-center" title="Family name"><Field label="Family name" className="ml-auto w-[170px]" /></Row>
          <Row className="h-5 items-center" title="Given name(s)"><Field label="Given names" className="ml-auto w-[170px]" /></Row>
          <Row no="2." className="h-4 items-center" title={<b className="w-[68px]">Your sex</b>}>
            <Check label="Male" className="w-11" />
            <Check label="Female" />
          </Row>
          <Row no="3." className="h-5 items-center" title={<b className="w-[68px]">Your date of birth</b>}>
            <span className="flex h-[18px] w-20 border border-black bg-white text-center text-[5px] leading-[6px]">
              {[["Day", "w-5"], ["Month", "w-5"], ["Year", "w-[38px]"]].map(([part, width]) => (
                <span key={part} className={clsx("relative flex shrink-0 flex-col items-center justify-between", width)}>
                  {part}
                  <span className="flex h-[2px] w-full justify-evenly">
                    <span className="w-px bg-black" />
                    {part === "Year" && <><span className="w-px bg-black" /><span className="w-px bg-black" /></>}
                  </span>
                  {part !== "Year" && <span className="absolute bottom-0 right-0 h-[10px] w-px bg-black" />}
                </span>
              ))}
            </span>
          </Row>
          <Row no="4." className="h-5 items-center" title={<b className="w-[69px]">Your place of birth</b>}>
            Town/City<Field label="Town or city" className="ml-auto w-[114px]" />
          </Row>
          <Row className="h-5 items-center" title={<span className="w-[69px]" />}>
            Country<Field label="Country" className="ml-auto w-[114px]" />
          </Row>
          <Row no="5." className="h-5 pt-px" title={<b>Your country</b>}><Field label="Citizenship" className="ml-auto w-[148px]" /></Row>
        </div>
        <div className="min-w-0 flex-1 bg-[#f2f2f2] pl-1 pr-[7px]">
          <div className="flex h-[41px] justify-between pt-[3px] leading-[12px]">
            <div>
              <Row no="12." className="gap-px" title={<b>Education</b>} />
              <Row className="gap-px" title="How many years of formal education do you have?" />
              <Row className="gap-px" title="What is your highest level of completed education?" />
            </div>
            <Field label="Years of education" className="mt-[9px] w-10" />
          </div>
          <div className="ml-[14px] grid grid-cols-[104px_1fr]">
            {LEVELS.map((level) => <Check key={level} label={level} className="h-3" />)}
          </div>
          <Row no="13." className="mt-1 h-[18px] items-center gap-px" title={<b>Your current occupation</b>}>
            <Field label="Occupation" className="ml-auto mr-px w-[131px]" />
          </Row>
          <Row no="14." className="h-[14px] items-center gap-px" title={<b>Your mailing address (include city and country)</b>} />
          <Field label="Mailing address" className="ml-[14px] block w-[216px]" />
        </div>
      </div>
    </article>
  );
}

function NavBar() {
  return (
    <footer className="flex h-8 shrink-0 items-center bg-[#f2f2f2] text-xs">
      <span className="ml-[2px]"><GripColumn /></span>
      <button aria-label="More" className="ml-[14px]"><DoubleChevron /></button>
      <span className="ml-4"><GripColumn /></span>
      <div className="ml-[3px] flex shrink-0 items-center gap-[6px]">
        <RoundArrow label="First page" color="#9fd0fa" ring="#a5a5a5" d="M7 6v10M15 6l-5 5 5 5" />
        <RoundArrow label="Previous page" color="#9fd0fa" ring="#a5a5a5" d="M13 6l-5 5 5 5" />
      </div>
      <label className="mx-1 flex h-6 min-w-0 max-w-[90px] flex-1 items-center rounded-[2px] border border-[#aaa] bg-white pr-[3px]">
        <input aria-label="Page number" defaultValue="1" className="w-full min-w-0 bg-transparent text-right outline-none" />
        <span className="ml-[3px]">/</span>
        <span className="mb-1 text-[9px] text-[#555]">2</span>
      </label>
      <div className="flex shrink-0 items-center gap-[6px]">
        <RoundArrow label="Next page" color="#42a3f5" d="M9 6l5 5-5 5" />
        <RoundArrow label="Last page" color="#42a3f5" d="M7 6l5 5-5 5M15.500 6v10" />
      </div>
      <Sep className="ml-1 mr-[5px]" />
      <RoundArrow label="Previous view" color="#76b53d" d={LEFT} />
      <button aria-label="More views" className="ml-[6px]"><DoubleChevron /></button>
      <span className="ml-[3px]"><GripColumn /></span>
      <button aria-label="Single page" className="ml-[6px]"><Svg w={16} h={22}><Page w={16} h={22} c={6} /></Svg></button>
      <button aria-label="Continuous" className="ml-[6px] flex h-7 w-7 shrink-0 items-center justify-center rounded-[2px] border border-[#c9b57f] bg-[#e3d1a2]">
        <Svg w={18} h={22}>
          <path d="M1.500 0v9h15V0" fill="#fff" stroke="#6b6b6b" />
          <path d="M1.500 22v-9.500h9l6 6V22" fill="#fff" stroke="#6b6b6b" />
          <path d="M10 12l7 7.500-6-2.500z" fill="#555" />
        </Svg>
      </button>
      <button aria-label="Two pages" className="ml-[2px]">
        <Svg w={26} h={16}><Page w={11} h={15} c={4} /><Page x={13} w={11} h={15} c={4} /></Svg>
      </button>
      <button aria-label="More layouts" className="ml-[3px]"><DoubleChevron /></button>
      <span className="ml-[3px]"><GripColumn /></span>
      <div className="relative ml-px shrink-0">
        <select aria-label="Zoom" className="h-6 w-[82px] appearance-none rounded-[2px] border border-[#aaa] bg-white pl-[3px] outline-none">
          <option>71.69%</option>
        </select>
        <span className="pointer-events-none absolute right-[5px] top-[9px]"><Chevron /></span>
      </div>
      <Sep className="ml-[3px] mr-1" />
      <RoundArrow label="Zoom out" color="#42a3f5" d="M5 11h12" />
      <button aria-label="More zoom" className="ml-[6px]"><DoubleChevron /></button>
      <span className="ml-[3px]"><GripColumn /></span>
      <button aria-label="More tools" className="ml-[14px]"><DoubleChevron /></button>
      <span className="ml-auto mr-[2px] self-start">
        <Svg w={8} h={8}><path d="M1 1l3 3 3-3M0 7.300h8" stroke="#333" strokeWidth="1.200" /></Svg>
      </span>
    </footer>
  );
}

export default function App() {
  return (
    <div className="h-screen min-h-[612px] overflow-hidden bg-[#e8e8e8] font-[Lato,'Noto_Sans',sans-serif] text-black">
      <div className="flex h-full flex-col overflow-hidden rounded-[8px] border border-[#a8a8a8] bg-[#d5d5d5]">
        <TitleBar />
        <RibbonTabs />
        <Ribbon />
        <DocumentTabs />
        <div className={clsx("flex min-h-0 flex-1 bg-[#a2a2a2]", TEXTURE)}>
          <PaneBar />
          <BookmarksPanel />
          <div className="flex w-[11px] shrink-0 items-center">
            <button aria-label="Hide panel" className="flex h-[60px] w-[9px] items-center justify-center rounded-[4px] border border-[#888] bg-[#dcdcdc]">
              <Svg w={5} h={7}><path d="M4 1L1.500 3.500 4 6" stroke="#222" strokeWidth="1.500" /></Svg>
            </button>
          </div>
          <main className="flex min-w-0 flex-1 flex-col">
            <div className="flex min-h-0 flex-1 bg-[#ececec] pt-px">
              <div className="min-w-0 flex-1 border-2 border-[#6e6e6e]"><FormPage /></div>
              <div className="flex w-[14px] shrink-0 flex-col items-center py-[5px]">
                <Svg w={8} h={6}><path d="M1 5l3-3 3 3" stroke="#555" strokeWidth="1.600" /></Svg>
                <span className="mt-[5px] h-[88px] w-[5px] rounded-full bg-[#888]" />
                <span className="mt-auto"><Svg w={8} h={6}><path d="M1 1l3 3 3-3" stroke="#555" strokeWidth="1.600" /></Svg></span>
              </div>
            </div>
            <NavBar />
          </main>
        </div>
      </div>
    </div>
  );
}
